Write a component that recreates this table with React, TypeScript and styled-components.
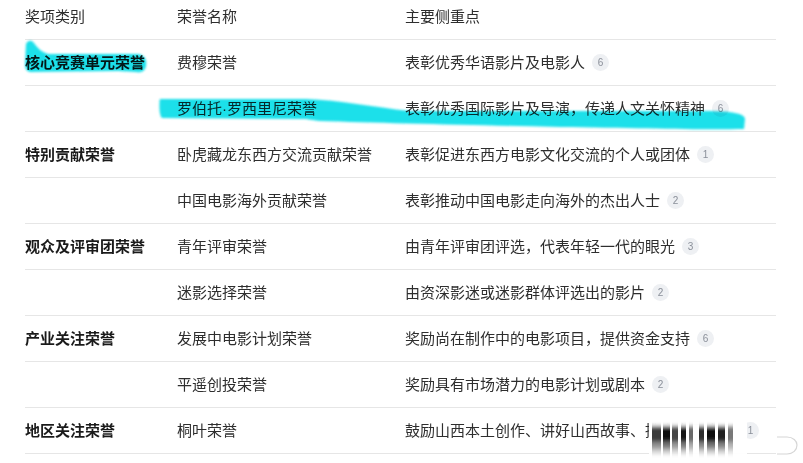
import React from 'react';
import styled, { createGlobalStyle } from 'styled-components';

const GlobalStyle = createGlobalStyle`
  html, body {
    margin: 0;
    padding: 0;
    background: #ffffff;
  }
  body {
    font-family: "Liberation Sans", "Noto Sans CJK SC", sans-serif;
    overflow: hidden;
  }
`

const Page = styled.div`
  position: relative;
  width: 803px;
  height: 463px;
  overflow: hidden;
  background: #fff;
`

const Table = styled.div`
  margin: -6px 0 0 25px;
  width: 751px;
`

const Row = styled.div`
  display: grid;
  grid-template-columns: 152px 228px 1fr;
  height: 46px;
  align-items: center;
  border-bottom: 1px solid #e6e6e6;
  box-sizing: border-box;
`

const Cell = styled.div<{ $bold?: boolean }>`
  display: flex;
  align-items: center;
  font-size: 15px;
  line-height: 20px;
  color: ${p => (p.$bold ? '#1a1a1a' : '#2e2e2e')};
  font-weight: ${p => (p.$bold ? 700 : 400)};
  white-space: nowrap;
`

const Badge = styled.span`
  display: inline-flex;
  align-items: center;
  justify-content: center;
  margin-left: 7px;
  min-width: 17px;
  height: 17px;
  padding: 0 2px;
  box-sizing: border-box;
  border-radius: 9px;
  background: #eef0f3;
  color: #8a8f99;
  font-size: 10px;
`

const Overlay = styled.svg`
  position: absolute;
  left: 0;
  top: 0;
  pointer-events: none;
`

const Marker = styled(Overlay)`
  mix-blend-mode: multiply;
`

interface Award {
  group?: string;
  name: string;
  focus: string;
  count: number;
}

const awards: Award[] = [
  { group: '核心竞赛单元荣誉', name: '费穆荣誉', focus: '表彰优秀华语影片及电影人', count: 6 },
  { name: '罗伯托·罗西里尼荣誉', focus: '表彰优秀国际影片及导演，传递人文关怀精神', count: 6 },
  { group: '特别贡献荣誉', name: '卧虎藏龙东西方交流贡献荣誉', focus: '表彰促进东西方电影文化交流的个人或团体', count: 1 },
  { name: '中国电影海外贡献荣誉', focus: '表彰推动中国电影走向海外的杰出人士', count: 2 },
  { group: '观众及评审团荣誉', name: '青年评审荣誉', focus: '由青年评审团评选，代表年轻一代的眼光', count: 3 },
  { name: '迷影选择荣誉', focus: '由资深影迷或迷影群体评选出的影片', count: 2 },
  { group: '产业关注荣誉', name: '发展中电影计划荣誉', focus: '奖励尚在制作中的电影项目，提供资金支持', count: 6 },
  { name: '平遥创投荣誉', focus: '奖励具有市场潜力的电影计划或剧本', count: 2 },
  { group: '地区关注荣誉', name: '桐叶荣誉', focus: '鼓励山西本土创作、讲好山西故事、推广山西电影', count: 1 },
];

// blurred watermark bars in the lower right corner
const bars = [
  { x: 652, w: 9, o: 0.8 },
  { x: 663, w: 7, o: 1 },
  { x: 672, w: 6, o: 0.75 },
  { x: 681, w: 5, o: 0.95 },
  { x: 689, w: 4, o: 0.6 },
  { x: 699, w: 5, o: 0.85 },
  { x: 707, w: 8, o: 1 },
  { x: 718, w: 7, o: 0.9 },
  { x: 728, w: 5, o: 0.55 },
];

const App = () => (
  <Page>
    <GlobalStyle />
    <Table>
      <Row>
        <Cell>奖项类别</Cell>
        <Cell>荣誉名称</Cell>
        <Cell>主要侧重点</Cell>
      </Row>
      {awards.map((a, i) => (
        <Row key={i}>
          <Cell $bold>{a.group}</Cell>
          <Cell>{a.name}</Cell>
          <Cell>
            {a.focus}
            <Badge>{a.count}</Badge>
          </Cell>
        </Row>
      ))}
    </Table>

    <Marker width="803" height="463" viewBox="0 0 803 463">
      <defs>
        <filter id="soft" x="-5%" y="-20%" width="110%" height="140%">
          <feGaussianBlur stdDeviation="0.8" />
        </filter>
      </defs>
      <g fill="#1fe0ea" filter="url(#soft)">
        <path d="M26 44 C28 40 31 40 33 42 C37 47 41 52 48 54 L138 54 C145 55 147 60 146 66 C145 71 142 73 136 72 L118 71 L30 72 C26 71 25 68 25 64 Z" />
        <path d="M160 99 L306 99 C340 100 372 107 410 111 L706 111 C734 111 745 114 745 119 L744 129 C700 130 640 128 560 127 C470 125 380 123 320 121 C312 120 308 119 300 119 L162 118 C159 116 159 102 160 99 Z" />
      </g>
    </Marker>

    <Overlay width="803" height="463" viewBox="0 0 803 463">
      <defs>
        <filter id="blurV" x="600" y="400" width="180" height="70" filterUnits="userSpaceOnUse">
          <feGaussianBlur stdDeviation="0.7 2" />
        </filter>
      </defs>
      <g filter="url(#blurV)">
        <rect x={649} y={420} width={98} height={37} fill="#fff" />
        {bars.map((b, i) => (
          <g key={i} opacity={b.o}>
            <rect x={b.x} y={426} width={b.w} height={16} fill="#0a0a0a" />
            <rect x={b.x} y={442} width={b.w} height={7} fill="#0a0a0a" opacity={0.55} />
            <rect x={b.x} y={449} width={b.w} height={5} fill="#0a0a0a" opacity={0.2} />
          </g>
        ))}
      </g>
      <path d="M777 437 L787 437 C793 437 797 441 797 445 C797 450 793 454 787 454 L777 454" fill="none" stroke="#d6d6d6" strokeWidth="1.2" />
    </Overlay>
  </Page>
);

export default App;
